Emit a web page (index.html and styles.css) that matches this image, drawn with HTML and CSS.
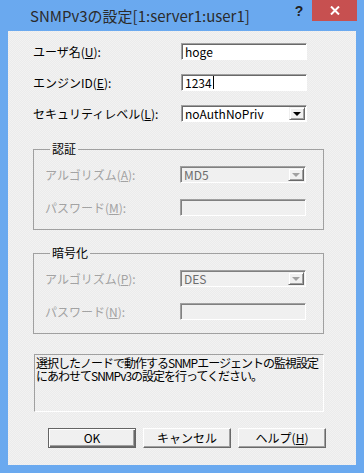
FILE: index.html
```html
<!doctype html>
<html lang="ja">
    <head>
        <meta charset="utf-8">
        <link rel="stylesheet" href="styles.css">
    </head>
    <body>
        <div class="window">
            <div class="titlebar">
                <span class="title">SNMPv3の設定[1:server1:user1]</span>
                <span class="help">?</span>
                <span class="close">
                    <svg width="10" height="9" viewBox="0 0 10 9">
                        <path d="M1 0.5 L9 8.5 M9 0.5 L1 8.5" stroke="#fff" stroke-width="2"/>
                    </svg>
                </span>
            </div>
            <div class="client">
                <div class="form">
                    <label class="label">ユーザ名(<u>U</u>):</label>
                    <div class="field">hoge</div>
                    <label class="label">エンジンID(<u>E</u>):</label>
                    <div class="field">1234<span class="caret"></span></div>
                    <label class="label">セキュリティレベル(<u>L</u>):</label>
                    <div class="field select">
                        <span class="value">noAuthNoPriv</span>
                        <span class="drop"></span>
                    </div>
                </div>

                <fieldset class="group">
                    <legend>認証</legend>
                    <div class="form sub">
                        <label class="label off">アルゴリズム(<u>A</u>):</label>
                        <div class="field select off">
                            <span class="value">MD5</span>
                            <span class="drop"></span>
                        </div>
                        <label class="label off">パスワード(<u>M</u>):</label>
                        <div class="field off"></div>
                    </div>
                </fieldset>

                <fieldset class="group second">
                    <legend>暗号化</legend>
                    <div class="form sub">
                        <label class="label off">アルゴリズム(<u>P</u>):</label>
                        <div class="field select off">
                            <span class="value">DES</span>
                            <span class="drop"></span>
                        </div>
                        <label class="label off">パスワード(<u>N</u>):</label>
                        <div class="field off"></div>
                    </div>
                </fieldset>

                <div class="message">
                    <div class="line">選択したノードで動作するSNMPエージェントの監視設定</div>
                    <div class="line">にあわせてSNMPv3の設定を行ってください。</div>
                </div>

                <div class="buttons">
                    <button class="btn default">OK</button>
                    <button class="btn">キャンセル</button>
                    <button class="btn">ヘルプ(<u>H</u>)</button>
                </div>
            </div>
        </div>
    </body>
</html>
```

FILE: styles.css
```css
body {
    margin: 0;
    font-family: "Noto Sans CJK JP", "Liberation Sans", sans-serif;
    font-size: 12px;
}
.window {
    width: 364px;
    height: 473px;
    box-sizing: border-box;
    background: #6aa9ef;
    padding: 0 8px 8px;
    display: flex;
    flex-direction: column;
}
.titlebar {
    height: 31px;
    display: flex;
    align-items: flex-start;
    margin-right: -1px;
}
.title {
    flex: 1;
    padding: 6px 0 0 22px;
    font-size: 15px;
    line-height: 20px;
    color: #2b2b2b;
}
.help {
    width: 26px;
    padding-top: 3px;
    text-align: center;
    font-family: "Liberation Sans", sans-serif;
    font-weight: bold;
    font-size: 14px;
    line-height: 16px;
    color: #222;
}
.close {
    width: 45px;
    height: 21px;
    background: #c75050;
    display: flex;
    align-items: center;
    justify-content: center;
}
.client {
    flex: 1;
    background: repeating-conic-gradient(#f2f2f2 0 25%, #ebebeb 0 50%) 0 0 / 2px 2px;
    padding: 12px 0 0 25px;
    box-sizing: border-box;
}
.form {
    display: grid;
    grid-template-columns: 148px 126px;
    row-gap: 14px;
    align-items: center;
}
.form.sub {
    grid-template-columns: 135px 126px;
    row-gap: 16px;
}
.label {
    line-height: 14px;
    color: #000;
}
.label.off {
    color: #a3a3a3;
}
.field {
    height: 17px;
    box-sizing: border-box;
    background: #fff;
    border-top: 1px solid #a0a0a0;
    border-left: 1px solid #a0a0a0;
    border-right: 1px solid #fff;
    border-bottom: 1px solid #fff;
    box-shadow: inset 1px 1px #696969;
    padding-left: 3px;
    line-height: 15px;
    display: flex;
    align-items: center;
}
.field.off {
    background: #f0f0f0;
    color: #6d6d6d;
    box-shadow: inset 1px 1px #808080;
}
.caret {
    width: 1px;
    height: 13px;
    background: #000;
    margin-left: 1px;
}
.select .value {
    flex: 1;
}
.drop {
    width: 16px;
    height: 13px;
    margin-right: 1px;
    box-sizing: border-box;
    background: #f0f0f0;
    border-top: 1px solid #f0f0f0;
    border-left: 1px solid #f0f0f0;
    border-right: 1px solid #696969;
    border-bottom: 1px solid #696969;
    box-shadow: inset 1px 1px #fff, inset -1px -1px #a0a0a0;
    display: flex;
    align-items: center;
    justify-content: center;
}
.drop::after {
    content: "";
    border-left: 4px solid transparent;
    border-right: 4px solid transparent;
    border-top: 4px solid #000;
}
.off .drop::after {
    border-top-color: #a0a0a0;
}
.group {
    width: 291px;
    box-sizing: border-box;
    margin: 20px 0 0;
    padding: 10px 0 13px 11px;
    border: 1px solid #a0a0a0;
    min-inline-size: 0;
}
.group.second {
    margin-top: 16px;
}
.group legend {
    padding: 0 2px;
    margin-left: 5px;
    line-height: 14px;
    color: #000;
}
.message {
    width: 290px;
    height: 58px;
    box-sizing: border-box;
    margin: 20px 0 0 1px;
    border-top: 1px solid #a0a0a0;
    border-left: 1px solid #a0a0a0;
    border-right: 1px solid #fff;
    border-bottom: 1px solid #fff;
    padding: 1px 0 0 1px;
    letter-spacing: -1px;
    white-space: nowrap;
    color: #000;
}
.line {
    height: 13px;
    line-height: 13px;
}
.buttons {
    display: flex;
    gap: 7px;
    margin: 16px 0 0 15px;
}
.btn {
    width: 88px;
    height: 20px;
    box-sizing: border-box;
    padding: 0;
    font: inherit;
    line-height: 16px;
    background: #f0f0f0;
    color: #000;
    border-top: 1px solid #fff;
    border-left: 1px solid #fff;
    border-right: 1px solid #696969;
    border-bottom: 1px solid #696969;
    box-shadow: inset -1px -1px #a0a0a0;
}
.btn.default {
    border: 1px solid #646464;
    box-shadow: inset 1px 1px #fff, inset -1px -1px #696969, inset -2px -2px #a0a0a0;
}
```
